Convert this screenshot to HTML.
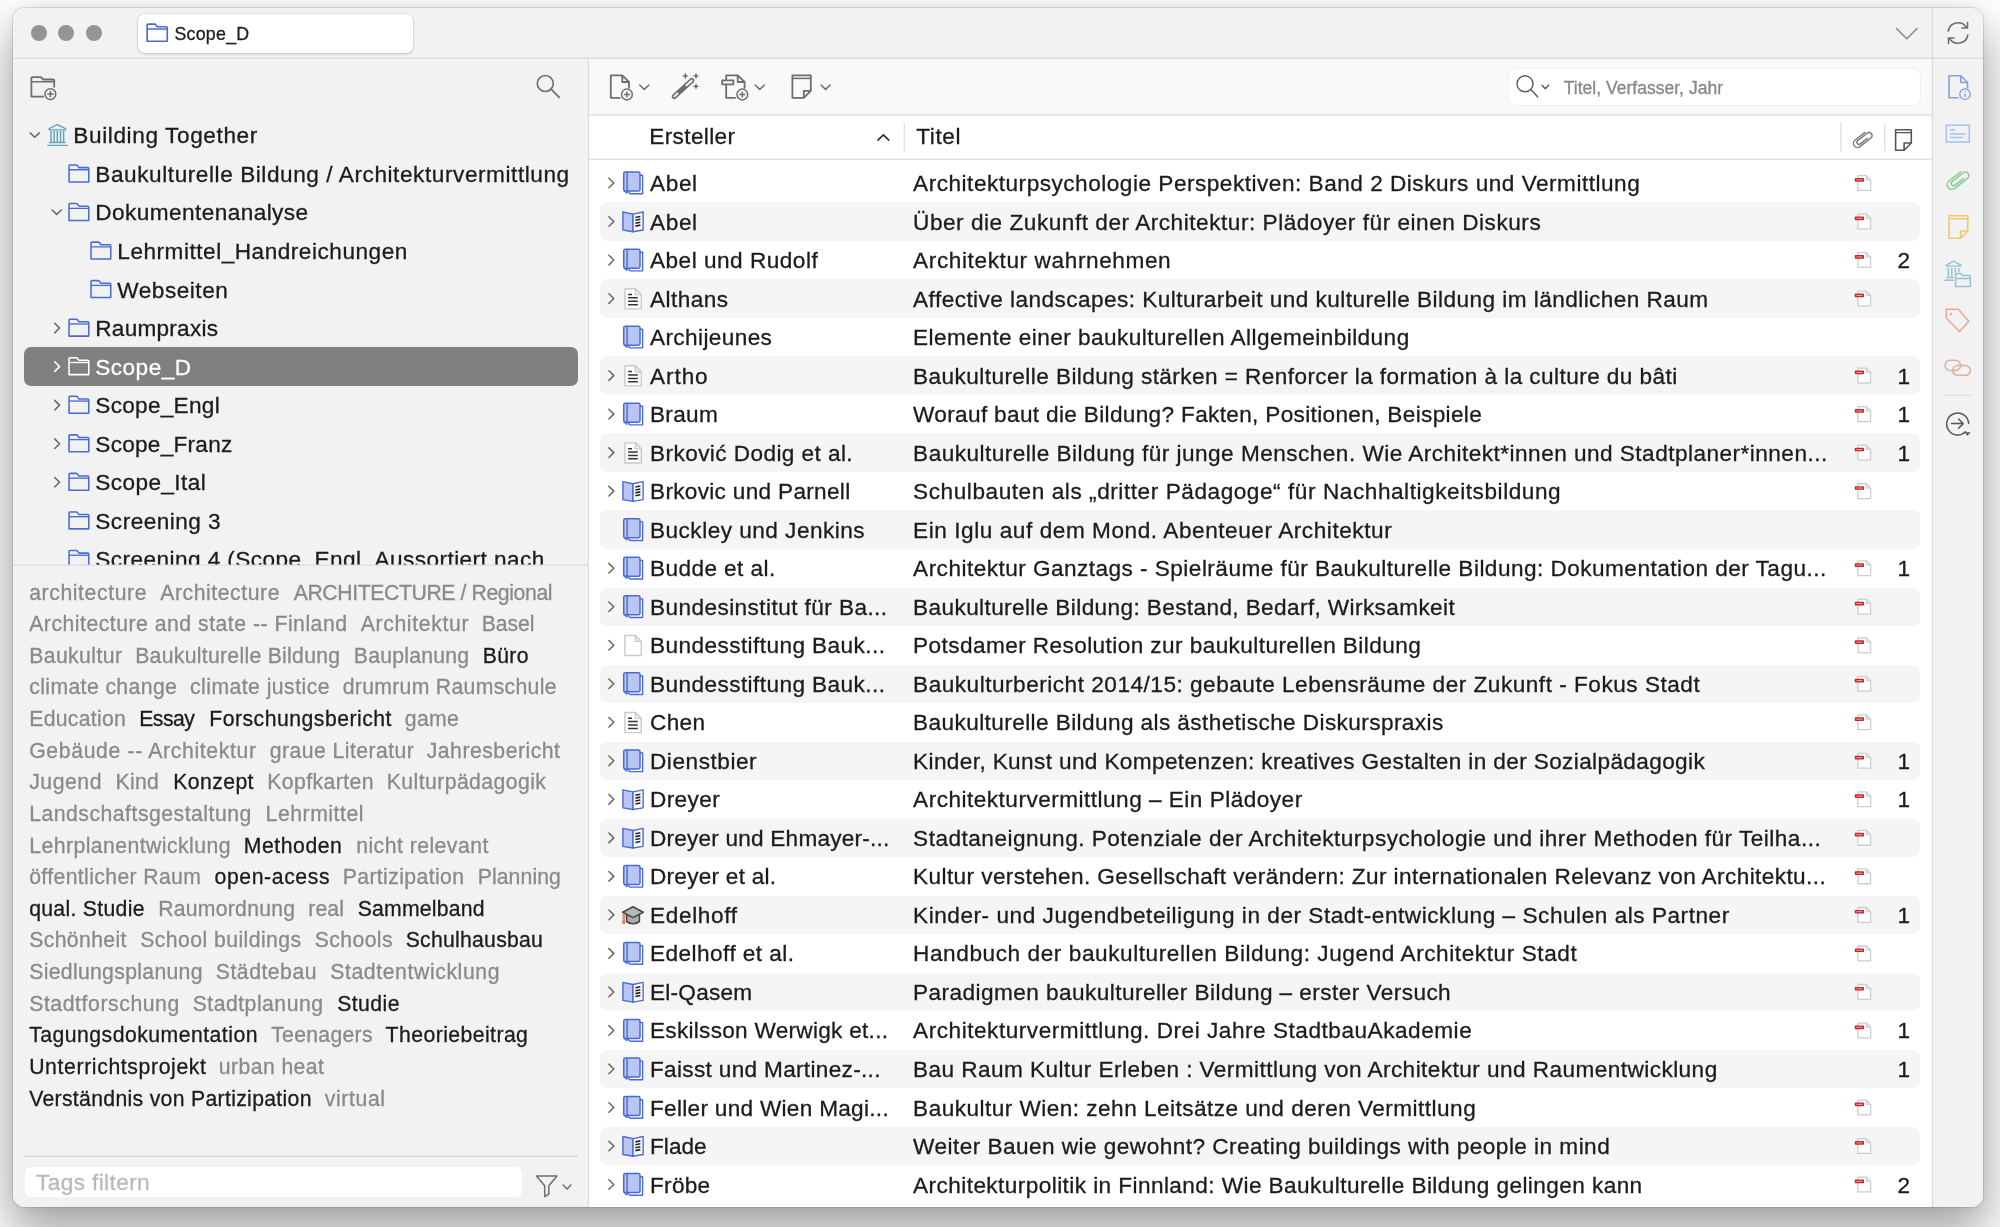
<!DOCTYPE html>
<html lang="de"><head><meta charset="utf-8"><title>Scope_D - Zotero</title>
<style>
html,body{margin:0;padding:0}
body{width:2000px;height:1227px;overflow:hidden;position:relative;background:#fff;
 font-family:"Liberation Sans",sans-serif;font-size:22.6px;letter-spacing:0.4px;color:#1c1c1c}
.t{position:absolute;white-space:nowrap;line-height:30px;height:30px;-webkit-text-stroke:.3px}
#shadow{position:absolute;left:13px;top:8px;width:1970px;height:1199px;border-radius:12px;
 box-shadow:0 0 0 1px rgba(0,0,0,.10),0 24px 50px 4px rgba(0,0,0,.36),0 0 10px rgba(0,0,0,.06)}
#win{will-change:transform;position:absolute;left:13px;top:8px;width:1970px;height:1199px;border-radius:12px;overflow:hidden;background:#f2f2f2}
#in{position:absolute;left:-13px;top:-8px;width:2000px;height:1227px}
#in>div,#in>svg,#tree>div,#tree>svg{position:absolute}
.tl{width:16.400px;height:16.400px;border-radius:50%;background:#949494;top:24.900px}
.hl{background:#dadada;height:1px}
.vl{background:#dadada;width:1px}
.tag{color:#8a8a8a}
.tag.d{color:#1c1c1c}
.row{left:600px;width:1320px;height:38.500px;border-radius:7px;background:#f5f5f5}
svg{overflow:visible}
</style></head><body>
<div id="shadow"></div>
<div id="win"><div id="in">
<div style="left:589px;top:59px;width:1343px;height:56px;background:#f9f9f9"></div>
<div style="left:589px;top:116px;width:1343px;height:1095px;background:#fff"></div>
<div style="left:1933px;top:59px;width:51px;height:1150px;background:#f2f2f2"></div>
<div class="tl" style="left:30.6px"></div>
<div class="tl" style="left:58.1px"></div>
<div class="tl" style="left:85.6px"></div>
<div style="left:138px;top:14px;width:275px;height:38.500px;background:#fff;border-radius:7px;box-shadow:0 0 0 1px rgba(0,0,0,.05),0 1px 3px rgba(0,0,0,.16)"></div>
<div class="t" style="left:174.4px;top:19.1px;font-size:17.8px;letter-spacing:0.274px;">Scope_D</div>
<div id="tree" style="left:13px;top:116px;width:575px;height:449px;overflow:hidden">
<div style="left:-13px;top:-116px;width:600px;height:700px">
<div style="position:absolute;left:24px;top:347.3px;width:554px;height:38.600px;border-radius:7px;background:#808080"></div>
<svg width="600" height="700" viewBox="0 0 600 700" fill="none" style="position:absolute;left:0;top:0"><path d="M30.10 132.90l4.60 4.40 4.60 -4.40" stroke="#666" stroke-width="1.5" stroke-linecap="round" stroke-linejoin="round"/><g transform="translate(47.30 124.00)"><path d="M10 .6L1.800 4.700v1.100h16.400V4.700z" stroke="#5fa5bb" stroke-width="1.300" stroke-linejoin="round"/><path d="M3.7 6.9v11.100M6.8 6.9v11.100M10 6.9v11.100M13.2 6.9v11.100M16.3 6.9v11.100" stroke="#5fa5bb" stroke-width="1.500"/><path d="M1.800 18.500h16.400" stroke="#5fa5bb" stroke-width="1.300"/><path d="M0 21.400h20.400" stroke="#5fa5bb" stroke-width="1.400"/></g><g transform="translate(68.20 164.15) scale(1.0)"><path d="M.85 17.75V1.85a1 1 0 0 1 1-1h6.400a1.200 1.200 0 0 1 .9.450l1.500 2.150h8.900a1 1 0 0 1 1 1v13.300z" stroke="#4a6bd6" stroke-width="1.55" stroke-linejoin="round"/><path d="M.85 5.600h19.700" stroke="#4a6bd6" stroke-width="1.35"/></g><path d="M52.10 210.00l4.60 4.40 4.60 -4.40" stroke="#666" stroke-width="1.5" stroke-linecap="round" stroke-linejoin="round"/><g transform="translate(68.20 202.70) scale(1.0)"><path d="M.85 17.75V1.85a1 1 0 0 1 1-1h6.400a1.200 1.200 0 0 1 .9.450l1.500 2.150h8.900a1 1 0 0 1 1 1v13.300z" stroke="#4a6bd6" stroke-width="1.55" stroke-linejoin="round"/><path d="M.85 5.600h19.700" stroke="#4a6bd6" stroke-width="1.35"/></g><g transform="translate(90.20 241.25) scale(1.0)"><path d="M.85 17.75V1.85a1 1 0 0 1 1-1h6.400a1.200 1.200 0 0 1 .9.450l1.500 2.150h8.900a1 1 0 0 1 1 1v13.300z" stroke="#4a6bd6" stroke-width="1.55" stroke-linejoin="round"/><path d="M.85 5.600h19.700" stroke="#4a6bd6" stroke-width="1.35"/></g><g transform="translate(90.20 279.80) scale(1.0)"><path d="M.85 17.75V1.85a1 1 0 0 1 1-1h6.400a1.200 1.200 0 0 1 .9.450l1.500 2.150h8.900a1 1 0 0 1 1 1v13.300z" stroke="#4a6bd6" stroke-width="1.55" stroke-linejoin="round"/><path d="M.85 5.600h19.700" stroke="#4a6bd6" stroke-width="1.35"/></g><path d="M54.70 323.25l4.9 4.8-4.9 4.8" stroke="#666" stroke-width="1.5" stroke-linecap="round" stroke-linejoin="round"/><g transform="translate(68.20 318.35) scale(1.0)"><path d="M.85 17.75V1.85a1 1 0 0 1 1-1h6.400a1.200 1.200 0 0 1 .9.450l1.500 2.150h8.900a1 1 0 0 1 1 1v13.300z" stroke="#4a6bd6" stroke-width="1.55" stroke-linejoin="round"/><path d="M.85 5.600h19.700" stroke="#4a6bd6" stroke-width="1.35"/></g><path d="M54.70 361.80l4.9 4.8-4.9 4.8" stroke="#fff" stroke-width="1.5" stroke-linecap="round" stroke-linejoin="round"/><g transform="translate(68.20 356.90) scale(1.0)"><path d="M.85 17.75V1.85a1 1 0 0 1 1-1h6.400a1.200 1.200 0 0 1 .9.450l1.500 2.150h8.900a1 1 0 0 1 1 1v13.300z" stroke="#fff" stroke-width="1.55" stroke-linejoin="round"/><path d="M.85 5.600h19.700" stroke="#fff" stroke-width="1.35"/></g><path d="M54.70 400.35l4.9 4.8-4.9 4.8" stroke="#666" stroke-width="1.5" stroke-linecap="round" stroke-linejoin="round"/><g transform="translate(68.20 395.45) scale(1.0)"><path d="M.85 17.75V1.85a1 1 0 0 1 1-1h6.400a1.200 1.200 0 0 1 .9.450l1.500 2.150h8.900a1 1 0 0 1 1 1v13.300z" stroke="#4a6bd6" stroke-width="1.55" stroke-linejoin="round"/><path d="M.85 5.600h19.700" stroke="#4a6bd6" stroke-width="1.35"/></g><path d="M54.70 438.90l4.9 4.8-4.9 4.8" stroke="#666" stroke-width="1.5" stroke-linecap="round" stroke-linejoin="round"/><g transform="translate(68.20 434.00) scale(1.0)"><path d="M.85 17.75V1.85a1 1 0 0 1 1-1h6.400a1.200 1.200 0 0 1 .9.450l1.500 2.150h8.900a1 1 0 0 1 1 1v13.300z" stroke="#4a6bd6" stroke-width="1.55" stroke-linejoin="round"/><path d="M.85 5.600h19.700" stroke="#4a6bd6" stroke-width="1.35"/></g><path d="M54.70 477.45l4.9 4.8-4.9 4.8" stroke="#666" stroke-width="1.5" stroke-linecap="round" stroke-linejoin="round"/><g transform="translate(68.20 472.55) scale(1.0)"><path d="M.85 17.75V1.85a1 1 0 0 1 1-1h6.400a1.200 1.200 0 0 1 .9.450l1.500 2.150h8.900a1 1 0 0 1 1 1v13.300z" stroke="#4a6bd6" stroke-width="1.55" stroke-linejoin="round"/><path d="M.85 5.600h19.700" stroke="#4a6bd6" stroke-width="1.35"/></g><g transform="translate(68.20 511.10) scale(1.0)"><path d="M.85 17.75V1.85a1 1 0 0 1 1-1h6.400a1.200 1.200 0 0 1 .9.450l1.500 2.150h8.900a1 1 0 0 1 1 1v13.300z" stroke="#4a6bd6" stroke-width="1.55" stroke-linejoin="round"/><path d="M.85 5.600h19.700" stroke="#4a6bd6" stroke-width="1.35"/></g><g transform="translate(68.20 549.65) scale(1.0)"><path d="M.85 17.75V1.85a1 1 0 0 1 1-1h6.400a1.200 1.200 0 0 1 .9.450l1.500 2.150h8.900a1 1 0 0 1 1 1v13.300z" stroke="#4a6bd6" stroke-width="1.55" stroke-linejoin="round"/><path d="M.85 5.600h19.700" stroke="#4a6bd6" stroke-width="1.35"/></g></svg>
<div class="t" style="left:73.3px;top:121.3px;letter-spacing:0.613px;">Building Together</div>
<div class="t" style="left:95.3px;top:159.9px;letter-spacing:0.568px;">Baukulturelle Bildung / Architekturvermittlung</div>
<div class="t" style="left:95.3px;top:198.4px;letter-spacing:0.426px;">Dokumentenanalyse</div>
<div class="t" style="left:117.3px;top:236.9px;letter-spacing:0.517px;">Lehrmittel_Handreichungen</div>
<div class="t" style="left:117.3px;top:275.5px;letter-spacing:0.520px;">Webseiten</div>
<div class="t" style="left:95.3px;top:314.1px;letter-spacing:0.239px;">Raumpraxis</div>
<div class="t" style="left:95.3px;top:352.6px;letter-spacing:0.458px;color:#fff">Scope_D</div>
<div class="t" style="left:95.3px;top:391.1px;letter-spacing:0.282px;">Scope_Engl</div>
<div class="t" style="left:95.3px;top:429.7px;letter-spacing:0.261px;">Scope_Franz</div>
<div class="t" style="left:95.3px;top:468.2px;letter-spacing:0.402px;">Scope_Ital</div>
<div class="t" style="left:95.3px;top:506.8px;letter-spacing:0.481px;">Screening 3</div>
<div class="t" style="left:95.3px;top:545.3px;letter-spacing:0.434px;">Screening 4 (Scope_Engl_Aussortiert nach</div>
</div></div>
<div class="t tag" style="left:29.2px;top:577.5px;font-size:21.2px;letter-spacing:0.600px;">architecture</div>
<div class="t tag" style="left:160.2px;top:577.5px;font-size:21.2px;letter-spacing:0.568px;">Architecture</div>
<div class="t tag" style="left:293.7px;top:577.5px;font-size:21.2px;letter-spacing:-0.385px;">ARCHITECTURE / Regional</div>
<div class="t tag" style="left:29.2px;top:609.1px;font-size:21.2px;letter-spacing:0.510px;">Architecture and state -- Finland</div>
<div class="t tag" style="left:360.7px;top:609.1px;font-size:21.2px;letter-spacing:0.653px;">Architektur</div>
<div class="t tag" style="left:481.7px;top:609.1px;font-size:21.2px;letter-spacing:-0.050px;">Basel</div>
<div class="t tag" style="left:29.2px;top:640.8px;font-size:21.2px;letter-spacing:0.411px;">Baukultur</div>
<div class="t tag" style="left:135.2px;top:640.8px;font-size:21.2px;letter-spacing:0.292px;">Baukulturelle Bildung</div>
<div class="t tag" style="left:353.8px;top:640.8px;font-size:21.2px;letter-spacing:0.243px;">Bauplanung</div>
<div class="t tag d" style="left:482.8px;top:640.8px;font-size:21.2px;letter-spacing:0.311px;">Büro</div>
<div class="t tag" style="left:29.2px;top:672.4px;font-size:21.2px;letter-spacing:0.399px;">climate change</div>
<div class="t tag" style="left:190.0px;top:672.4px;font-size:21.2px;letter-spacing:0.460px;">climate justice</div>
<div class="t tag" style="left:342.7px;top:672.4px;font-size:21.2px;letter-spacing:0.316px;">drumrum Raumschule</div>
<div class="t tag" style="left:29.2px;top:704.0px;font-size:21.2px;letter-spacing:0.306px;">Education</div>
<div class="t tag d" style="left:139.2px;top:704.0px;font-size:21.2px;letter-spacing:-0.501px;">Essay</div>
<div class="t tag d" style="left:209.2px;top:704.0px;font-size:21.2px;letter-spacing:0.500px;">Forschungsbericht</div>
<div class="t tag" style="left:404.8px;top:704.0px;font-size:21.2px;letter-spacing:0.367px;">game</div>
<div class="t tag" style="left:29.2px;top:735.6px;font-size:21.2px;letter-spacing:0.654px;">Gebäude -- Architektur</div>
<div class="t tag" style="left:269.8px;top:735.6px;font-size:21.2px;letter-spacing:0.449px;">graue Literatur</div>
<div class="t tag" style="left:426.7px;top:735.6px;font-size:21.2px;letter-spacing:0.509px;">Jahresbericht</div>
<div class="t tag" style="left:29.2px;top:767.3px;font-size:21.2px;letter-spacing:0.557px;">Jugend</div>
<div class="t tag" style="left:115.6px;top:767.3px;font-size:21.2px;letter-spacing:0.298px;">Kind</div>
<div class="t tag d" style="left:173.2px;top:767.3px;font-size:21.2px;letter-spacing:0.425px;">Konzept</div>
<div class="t tag" style="left:267.2px;top:767.3px;font-size:21.2px;letter-spacing:0.424px;">Kopfkarten</div>
<div class="t tag" style="left:386.8px;top:767.3px;font-size:21.2px;letter-spacing:0.426px;">Kulturpädagogik</div>
<div class="t tag" style="left:29.2px;top:798.9px;font-size:21.2px;letter-spacing:0.503px;">Landschaftsgestaltung</div>
<div class="t tag" style="left:265.6px;top:798.9px;font-size:21.2px;letter-spacing:0.541px;">Lehrmittel</div>
<div class="t tag" style="left:29.2px;top:830.5px;font-size:21.2px;letter-spacing:0.452px;">Lehrplanentwicklung</div>
<div class="t tag d" style="left:243.7px;top:830.5px;font-size:21.2px;letter-spacing:0.564px;">Methoden</div>
<div class="t tag" style="left:356.2px;top:830.5px;font-size:21.2px;letter-spacing:0.467px;">nicht relevant</div>
<div class="t tag" style="left:29.2px;top:862.2px;font-size:21.2px;letter-spacing:0.377px;">öffentlicher Raum</div>
<div class="t tag d" style="left:214.6px;top:862.2px;font-size:21.2px;letter-spacing:0.595px;">open-acess</div>
<div class="t tag" style="left:342.7px;top:862.2px;font-size:21.2px;letter-spacing:0.392px;">Partizipation</div>
<div class="t tag" style="left:477.7px;top:862.2px;font-size:21.2px;letter-spacing:0.104px;">Planning</div>
<div class="t tag d" style="left:29.2px;top:893.8px;font-size:21.2px;letter-spacing:0.307px;">qual. Studie</div>
<div class="t tag" style="left:158.2px;top:893.8px;font-size:21.2px;letter-spacing:0.262px;">Raumordnung</div>
<div class="t tag" style="left:308.2px;top:893.8px;font-size:21.2px;letter-spacing:0.152px;">real</div>
<div class="t tag d" style="left:357.7px;top:893.8px;font-size:21.2px;letter-spacing:0.217px;">Sammelband</div>
<div class="t tag" style="left:29.2px;top:925.4px;font-size:21.2px;letter-spacing:0.381px;">Schönheit</div>
<div class="t tag" style="left:140.2px;top:925.4px;font-size:21.2px;letter-spacing:0.439px;">School buildings</div>
<div class="t tag" style="left:314.8px;top:925.4px;font-size:21.2px;letter-spacing:0.385px;">Schools</div>
<div class="t tag d" style="left:405.7px;top:925.4px;font-size:21.2px;letter-spacing:0.264px;">Schulhausbau</div>
<div class="t tag" style="left:29.2px;top:957.1px;font-size:21.2px;letter-spacing:0.322px;">Siedlungsplanung</div>
<div class="t tag" style="left:215.8px;top:957.1px;font-size:21.2px;letter-spacing:0.511px;">Städtebau</div>
<div class="t tag" style="left:330.2px;top:957.1px;font-size:21.2px;letter-spacing:0.608px;">Stadtentwicklung</div>
<div class="t tag" style="left:29.2px;top:988.7px;font-size:21.2px;letter-spacing:0.582px;">Stadtforschung</div>
<div class="t tag" style="left:192.7px;top:988.7px;font-size:21.2px;letter-spacing:0.492px;">Stadtplanung</div>
<div class="t tag d" style="left:337.2px;top:988.7px;font-size:21.2px;letter-spacing:0.444px;">Studie</div>
<div class="t tag d" style="left:29.2px;top:1020.3px;font-size:21.2px;letter-spacing:0.484px;">Tagungsdokumentation</div>
<div class="t tag" style="left:271.2px;top:1020.3px;font-size:21.2px;letter-spacing:0.293px;">Teenagers</div>
<div class="t tag d" style="left:385.6px;top:1020.3px;font-size:21.2px;letter-spacing:0.437px;">Theoriebeitrag</div>
<div class="t tag d" style="left:29.2px;top:1052.0px;font-size:21.2px;letter-spacing:0.633px;">Unterrichtsprojekt</div>
<div class="t tag" style="left:218.8px;top:1052.0px;font-size:21.2px;letter-spacing:0.419px;">urban heat</div>
<div class="t tag d" style="left:29.2px;top:1083.6px;font-size:21.2px;letter-spacing:0.323px;">Verständnis von Partizipation</div>
<div class="t tag" style="left:324.7px;top:1083.6px;font-size:21.2px;letter-spacing:0.645px;">virtual</div>
<div style="left:25px;top:1167px;width:497px;height:30px;background:#fff;border-radius:6px"></div>
<div class="t" style="left:36.0px;top:1168.0px;color:#b9b9b9">Tags filtern</div>
<div style="left:1509px;top:68.500px;width:411px;height:36.500px;background:#fff;border-radius:7px;box-shadow:0 0 0 1px rgba(0,0,0,.035)"></div>
<div class="t" style="left:1563.7px;top:72.8px;font-size:17.5px;letter-spacing:0.021px;color:#878787">Titel, Verfasser, Jahr</div>
<div class="t" style="left:649.3px;top:122.3px;letter-spacing:0.353px;">Ersteller</div>
<div class="t" style="left:916.2px;top:122.3px;letter-spacing:0.610px;">Titel</div>
<div class="t" style="left:650.0px;top:169.0px;letter-spacing:0.622px;">Abel</div>
<div class="t" style="left:913.1px;top:169.0px;letter-spacing:0.506px;">Architekturpsychologie Perspektiven: Band 2 Diskurs und Vermittlung</div>
<div class="row" style="top:202.3px"></div>
<div class="t" style="left:650.0px;top:207.5px;letter-spacing:0.622px;">Abel</div>
<div class="t" style="left:913.1px;top:207.5px;letter-spacing:0.527px;">Über die Zukunft der Architektur: Plädoyer für einen Diskurs</div>
<div class="t" style="left:650.0px;top:246.0px;letter-spacing:0.493px;">Abel und Rudolf</div>
<div class="t" style="left:913.1px;top:246.0px;letter-spacing:0.605px;">Architektur wahrnehmen</div>
<div class="t" style="left:1897.5px;top:246.0px;">2</div>
<div class="row" style="top:279.3px"></div>
<div class="t" style="left:650.0px;top:284.6px;letter-spacing:0.454px;">Althans</div>
<div class="t" style="left:913.1px;top:284.6px;letter-spacing:0.442px;">Affective landscapes: Kulturarbeit und kulturelle Bildung im ländlichen Raum</div>
<div class="t" style="left:650.0px;top:323.1px;letter-spacing:0.384px;">Archijeunes</div>
<div class="t" style="left:913.1px;top:323.1px;letter-spacing:0.446px;">Elemente einer baukulturellen Allgemeinbildung</div>
<div class="row" style="top:356.3px"></div>
<div class="t" style="left:650.0px;top:361.6px;letter-spacing:0.921px;">Artho</div>
<div class="t" style="left:913.1px;top:361.6px;letter-spacing:0.423px;">Baukulturelle Bildung stärken = Renforcer la formation à la culture du bâti</div>
<div class="t" style="left:1897.5px;top:361.6px;">1</div>
<div class="t" style="left:650.0px;top:400.1px;letter-spacing:0.288px;">Braum</div>
<div class="t" style="left:913.1px;top:400.1px;letter-spacing:0.333px;">Worauf baut die Bildung? Fakten, Positionen, Beispiele</div>
<div class="t" style="left:1897.5px;top:400.1px;">1</div>
<div class="row" style="top:433.4px"></div>
<div class="t" style="left:650.0px;top:438.6px;letter-spacing:0.419px;">Brković Dodig et al.</div>
<div class="t" style="left:913.1px;top:438.6px;letter-spacing:0.470px;">Baukulturelle Bildung für junge Menschen. Wie Architekt*innen und Stadtplaner*innen...</div>
<div class="t" style="left:1897.5px;top:438.6px;">1</div>
<div class="t" style="left:650.0px;top:477.2px;letter-spacing:0.308px;">Brkovic und Parnell</div>
<div class="t" style="left:913.1px;top:477.2px;letter-spacing:0.557px;">Schulbauten als „dritter Pädagoge“ für Nachhaltigkeitsbildung</div>
<div class="row" style="top:510.4px"></div>
<div class="t" style="left:650.0px;top:515.7px;letter-spacing:0.479px;">Buckley und Jenkins</div>
<div class="t" style="left:913.1px;top:515.7px;letter-spacing:0.557px;">Ein Iglu auf dem Mond. Abenteuer Architektur</div>
<div class="t" style="left:650.0px;top:554.2px;letter-spacing:0.419px;">Budde et al.</div>
<div class="t" style="left:913.1px;top:554.2px;letter-spacing:0.464px;">Architektur Ganztags - Spielräume für Baukulturelle Bildung: Dokumentation der Tagu...</div>
<div class="t" style="left:1897.5px;top:554.2px;">1</div>
<div class="row" style="top:587.5px"></div>
<div class="t" style="left:650.0px;top:592.7px;letter-spacing:0.425px;">Bundesinstitut für Ba...</div>
<div class="t" style="left:913.1px;top:592.7px;letter-spacing:0.384px;">Baukulturelle Bildung: Bestand, Bedarf, Wirksamkeit</div>
<div class="t" style="left:650.0px;top:631.2px;letter-spacing:0.424px;">Bundesstiftung Bauk...</div>
<div class="t" style="left:913.1px;top:631.2px;letter-spacing:0.414px;">Potsdamer Resolution zur baukulturellen Bildung</div>
<div class="row" style="top:664.5px"></div>
<div class="t" style="left:650.0px;top:669.8px;letter-spacing:0.424px;">Bundesstiftung Bauk...</div>
<div class="t" style="left:913.1px;top:669.8px;letter-spacing:0.507px;">Baukulturbericht 2014/15: gebaute Lebensräume der Zukunft - Fokus Stadt</div>
<div class="t" style="left:650.0px;top:708.3px;letter-spacing:0.328px;">Chen</div>
<div class="t" style="left:913.1px;top:708.3px;letter-spacing:0.405px;">Baukulturelle Bildung als ästhetische Diskurspraxis</div>
<div class="row" style="top:741.5px"></div>
<div class="t" style="left:650.0px;top:746.8px;letter-spacing:0.542px;">Dienstbier</div>
<div class="t" style="left:913.1px;top:746.8px;letter-spacing:0.371px;">Kinder, Kunst und Kompetenzen: kreatives Gestalten in der Sozialpädagogik</div>
<div class="t" style="left:1897.5px;top:746.8px;">1</div>
<div class="t" style="left:650.0px;top:785.3px;letter-spacing:0.381px;">Dreyer</div>
<div class="t" style="left:913.1px;top:785.3px;letter-spacing:0.483px;">Architekturvermittlung – Ein Plädoyer</div>
<div class="t" style="left:1897.5px;top:785.3px;">1</div>
<div class="row" style="top:818.6px"></div>
<div class="t" style="left:650.0px;top:823.8px;letter-spacing:0.209px;">Dreyer und Ehmayer-...</div>
<div class="t" style="left:913.1px;top:823.8px;letter-spacing:0.487px;">Stadtaneignung. Potenziale der Architekturpsychologie und ihrer Methoden für Teilha...</div>
<div class="t" style="left:650.0px;top:862.4px;letter-spacing:0.253px;">Dreyer et al.</div>
<div class="t" style="left:913.1px;top:862.4px;letter-spacing:0.399px;">Kultur verstehen. Gesellschaft verändern: Zur internationalen Relevanz von Architektu...</div>
<div class="row" style="top:895.6px"></div>
<div class="t" style="left:650.0px;top:900.9px;letter-spacing:0.657px;">Edelhoff</div>
<div class="t" style="left:913.1px;top:900.9px;letter-spacing:0.532px;">Kinder- und Jugendbeteiligung in der Stadt-entwicklung – Schulen als Partner</div>
<div class="t" style="left:1897.5px;top:900.9px;">1</div>
<div class="t" style="left:650.0px;top:939.4px;letter-spacing:0.452px;">Edelhoff et al.</div>
<div class="t" style="left:913.1px;top:939.4px;letter-spacing:0.572px;">Handbuch der baukulturellen Bildung: Jugend Architektur Stadt</div>
<div class="row" style="top:972.7px"></div>
<div class="t" style="left:650.0px;top:977.9px;letter-spacing:0.238px;">El-Qasem</div>
<div class="t" style="left:913.1px;top:977.9px;letter-spacing:0.437px;">Paradigmen baukultureller Bildung – erster Versuch</div>
<div class="t" style="left:650.0px;top:1016.4px;letter-spacing:0.278px;">Eskilsson Werwigk et...</div>
<div class="t" style="left:913.1px;top:1016.4px;letter-spacing:0.523px;">Architekturvermittlung. Drei Jahre StadtbauAkademie</div>
<div class="t" style="left:1897.5px;top:1016.4px;">1</div>
<div class="row" style="top:1049.7px"></div>
<div class="t" style="left:650.0px;top:1055.0px;letter-spacing:0.318px;">Faisst und Martinez-...</div>
<div class="t" style="left:913.1px;top:1055.0px;letter-spacing:0.441px;">Bau Raum Kultur Erleben : Vermittlung von Architektur und Raumentwicklung</div>
<div class="t" style="left:1897.5px;top:1055.0px;">1</div>
<div class="t" style="left:650.0px;top:1093.5px;letter-spacing:0.290px;">Feller und Wien Magi...</div>
<div class="t" style="left:913.1px;top:1093.5px;letter-spacing:0.467px;">Baukultur Wien: zehn Leitsätze und deren Vermittlung</div>
<div class="row" style="top:1126.7px"></div>
<div class="t" style="left:650.0px;top:1132.0px;letter-spacing:0.042px;">Flade</div>
<div class="t" style="left:913.1px;top:1132.0px;letter-spacing:0.458px;">Weiter Bauen wie gewohnt? Creating buildings with people in mind</div>
<div class="t" style="left:650.0px;top:1170.5px;letter-spacing:0.292px;">Fröbe</div>
<div class="t" style="left:913.1px;top:1170.5px;letter-spacing:0.422px;">Architekturpolitik in Finnland: Wie Baukulturelle Bildung gelingen kann</div>
<div class="t" style="left:1897.5px;top:1170.5px;">2</div>
<svg width="2000" height="1227" viewBox="0 0 2000 1227" fill="none" style="left:0;top:0"><path d="M13 58.1H1984" stroke="#d9d9d9" stroke-width="1.2"/>
<path d="M589 115.0H1932" stroke="#e2e2e2" stroke-width="1.6"/>
<path d="M589 159.2H1932" stroke="#e4e4e4" stroke-width="1.5"/>
<path d="M588.45 58.7V1208" stroke="#dadada" stroke-width="1.2"/>
<path d="M1932.4 8V1208" stroke="#dadada" stroke-width="1.2"/>
<path d="M13 565.2H588" stroke="#dcdcdc" stroke-width="1.2"/>
<path d="M24 1156.4H578" stroke="#d6d6d6" stroke-width="1.1"/>
<g transform="translate(146.30 23.20) scale(1.02)"><path d="M.85 17.75V1.85a1 1 0 0 1 1-1h6.400a1.200 1.200 0 0 1 .9.450l1.500 2.150h8.900a1 1 0 0 1 1 1v13.300z" stroke="#4a6bd6" stroke-width="1.6" stroke-linejoin="round"/><path d="M.85 5.600h19.700" stroke="#4a6bd6" stroke-width="1.40"/></g>
<path d="M1896.500 28.500l10.300 10.300 10.300-10.300" stroke="#8a8a8a" stroke-width="1.500" stroke-linecap="round" stroke-linejoin="round"/>
<g transform="translate(1946 21)" stroke="#6e6e6e" stroke-width="1.600" stroke-linecap="round" stroke-linejoin="round"><path d="M2.200 10A10 10 0 0 1 20.500 6.500M21.800 14A10 10 0 0 1 3.500 17.500"/><path d="M21.500 1.500v5.500h-5.500M2.500 22.500V17h5.500"/></g>
<g stroke="#6e6e6e" stroke-width="1.800" stroke-linejoin="round"><path d="M44 96.700H31.400V78.100a1 1 0 0 1 1-1h8.300a1.200 1.200 0 0 1 .9.450l1.400 1.950h10.200a1 1 0 0 1 1 1v7"/><path d="M31.400 81.800h22.800" stroke-width="1.500"/><circle cx="50.400" cy="94.100" r="5.400" stroke-width="1.500"/><path d="M50.400 91v6.200M47.300 94.100h6.200" stroke-width="1.500"/></g>
<circle cx="545.300" cy="83.500" r="8" stroke="#6e6e6e" stroke-width="1.600"/><path d="M551.200 89.400l8 8" stroke="#6e6e6e" stroke-width="1.700" stroke-linecap="round"/>
<path d="M536.500 1176h20.500l-8.200 9.800v8.200l-4.100 2.600v-10.800z" stroke="#6e6e6e" stroke-width="1.500" stroke-linejoin="round"/>
<path d="M563.10 1185.00l3.90 4.00 3.90 -4.00" stroke="#6e6e6e" stroke-width="1.5" stroke-linecap="round" stroke-linejoin="round"/>
<path d="M620.500 97.800H610.800V75.300h11.500l6.700 6.700v6.500" stroke="#6e6e6e" stroke-width="1.800" stroke-linejoin="round"/><path d="M622.300 75.300v6.700h6.700" stroke="#6e6e6e" stroke-width="1.800" stroke-linejoin="round"/><circle cx="626.900" cy="94.500" r="5.400" stroke="#6e6e6e" stroke-width="1.500"/><path d="M626.900 91.400v6.200M623.800 94.500h6.200" stroke="#6e6e6e" stroke-width="1.500"/>
<path d="M639.70 85.00l4.60 4.40 4.60 -4.40" stroke="#6e6e6e" stroke-width="1.5" stroke-linecap="round" stroke-linejoin="round"/>
<path d="M674.400 96.400l17.300-15.800" stroke="#6e6e6e" stroke-width="5.200" stroke-linecap="round"/><path d="M674.500 96.300l3-2.740M686.500 85.340l5.100-4.660" stroke="#f9f9f9" stroke-width="2" stroke-linecap="round"/>
<path d="M685.4 72.4l0.95 2.55 2.55 0.95 -2.55 0.95 -0.95 2.55 -0.95 -2.55 -2.55 -0.95 2.55 -0.95z" fill="#6e6e6e"/><path d="M696 72.4l0.95 2.55 2.55 0.95 -2.55 0.95 -0.95 2.55 -0.95 -2.55 -2.55 -0.95 2.55 -0.95z" fill="#6e6e6e"/><path d="M696 82.9l0.95 2.55 2.55 0.95 -2.55 0.95 -0.95 2.55 -0.95 -2.55 -2.55 -0.95 2.55 -0.95z" fill="#6e6e6e"/>
<path d="M735.800 97.800H726.200V75.300h11.500l6.900 6.700v6.500" stroke="#6e6e6e" stroke-width="1.800" stroke-linejoin="round"/><path d="M737.700 75.300v6.700h6.900" stroke="#6e6e6e" stroke-width="1.800" stroke-linejoin="round"/><rect x="722.200" y="80.300" width="11.200" height="4" fill="#f9f9f9" stroke="#6e6e6e" stroke-width="1.800" stroke-linejoin="round"/><circle cx="742.300" cy="94.500" r="5.400" stroke="#6e6e6e" stroke-width="1.500"/><path d="M742.300 91.400v6.200M739.200 94.500h6.200" stroke="#6e6e6e" stroke-width="1.500"/>
<path d="M755.20 85.00l4.60 4.40 4.60 -4.40" stroke="#6e6e6e" stroke-width="1.5" stroke-linecap="round" stroke-linejoin="round"/>
<path d="M792.400 75.300h18.400v15.500l-7 7h-11.400z" stroke="#6e6e6e" stroke-width="1.800" stroke-linejoin="round"/><path d="M792.400 78.400h18.400" stroke="#6e6e6e" stroke-width="1.500"/><path d="M810.800 90.800h-7v7" stroke="#6e6e6e" stroke-width="1.800" stroke-linejoin="round"/>
<path d="M821.00 85.00l4.60 4.40 4.60 -4.40" stroke="#6e6e6e" stroke-width="1.5" stroke-linecap="round" stroke-linejoin="round"/>
<circle cx="1525" cy="83.800" r="8" stroke="#5c5c5c" stroke-width="1.400"/><path d="M1530.800 89.600l6.800 7.100" stroke="#5c5c5c" stroke-width="1.500" stroke-linecap="round"/>
<path d="M1542.10 85.30l3.20 3.40 3.20 -3.40" stroke="#5c5c5c" stroke-width="1.5" stroke-linecap="round" stroke-linejoin="round"/>
<path d="M878 140.200l5.400-5.400 5.400 5.400" stroke="#333" stroke-width="1.700" stroke-linecap="round" stroke-linejoin="round"/>
<path d="M904.3 122.500v29" stroke="#e0e0e0" stroke-width="1.300"/>
<path d="M1840.8 122.500v29" stroke="#e0e0e0" stroke-width="1.300"/>
<path d="M1884.8 122.500v29" stroke="#e0e0e0" stroke-width="1.300"/>
<g transform="translate(1862.6 139.4) rotate(-38) scale(0.8) translate(-13.700 -6.700)"><path d="M21.500 1.700H5.500a5 5 0 0 0 0 10h17.500a3.800 3.800 0 0 0 0-7.600H8a2.600 2.600 0 0 0 0 5.200H19.500" stroke="#777" stroke-width="1.75" stroke-linecap="round"/></g>
<g stroke="#555" stroke-width="1.600" stroke-linejoin="round"><path d="M1895.600 129.800h15.700v13.200l-7.200 7.200h-8.500z"/><path d="M1895.600 132.600h15.700" stroke-width="1.400"/><path d="M1911.300 143h-7.200v7.200"/></g>
<path d="M608.90 178.20l4.9 4.8-4.9 4.8" stroke="#666" stroke-width="1.5" stroke-linecap="round" stroke-linejoin="round"/>
<g transform="translate(622.00 171.00)"><path d="M5.2 20.2l3 2.6h12.4V4.200H18" fill="#fff" stroke="#4a6ad8" stroke-width="1.4" stroke-linejoin="round"/><rect x="1.7" y="1.1" width="16.3" height="19" rx="1.6" fill="#b8c6f1" stroke="#4a6ad8" stroke-width="1.5"/><path d="M5.1 1.2v18.8" stroke="#4a6ad8" stroke-width="1.4"/><path d="M1.9 19.6l3.4 3" stroke="#4a6ad8" stroke-width="1.4"/></g>
<g transform="translate(1854.00 174.00)"><path d="M3.9 1.600h8.400l4.300 4.300v10.500H3.900z" fill="#fff" stroke="#cdcdcd" stroke-width="1.300" stroke-linejoin="round"/><path d="M12.3 1.600v4.300h4.300z" fill="#e9e9e9" stroke="#cdcdcd" stroke-width="1" stroke-linejoin="round"/><rect x=".8" y="4" width="9.200" height="3.700" rx=".7" fill="#cf212c"/><path d="M2.300 5.850h6.200" stroke="#f4b4b8" stroke-width=".9"/></g>
<path d="M608.90 216.72l4.9 4.8-4.9 4.8" stroke="#666" stroke-width="1.5" stroke-linecap="round" stroke-linejoin="round"/>
<g transform="translate(622.00 211.02)"><path d="M.9 1l10.1 2.1v17.6L.9 19z" fill="#b8c6f1" stroke="#4a6ad8" stroke-width="1.4" stroke-linejoin="round"/><path d="M21.1 1L11 3.100v17.6l10.1-1.700z" fill="#fff" stroke="#4a6ad8" stroke-width="1.4" stroke-linejoin="round"/><path d="M13.4 6.4l5-1M13.4 9.300l5-1M13.4 12.200l5-1M13.4 15.100l5-1" stroke="#222" stroke-width="1.6"/></g>
<g transform="translate(1854.00 212.52)"><path d="M3.9 1.600h8.400l4.300 4.300v10.500H3.900z" fill="#fff" stroke="#cdcdcd" stroke-width="1.300" stroke-linejoin="round"/><path d="M12.3 1.600v4.300h4.300z" fill="#e9e9e9" stroke="#cdcdcd" stroke-width="1" stroke-linejoin="round"/><rect x=".8" y="4" width="9.200" height="3.700" rx=".7" fill="#cf212c"/><path d="M2.300 5.850h6.200" stroke="#f4b4b8" stroke-width=".9"/></g>
<path d="M608.90 255.24l4.9 4.8-4.9 4.8" stroke="#666" stroke-width="1.5" stroke-linecap="round" stroke-linejoin="round"/>
<g transform="translate(622.00 248.04)"><path d="M5.2 20.2l3 2.6h12.4V4.200H18" fill="#fff" stroke="#4a6ad8" stroke-width="1.4" stroke-linejoin="round"/><rect x="1.7" y="1.1" width="16.3" height="19" rx="1.6" fill="#b8c6f1" stroke="#4a6ad8" stroke-width="1.5"/><path d="M5.1 1.2v18.8" stroke="#4a6ad8" stroke-width="1.4"/><path d="M1.9 19.6l3.4 3" stroke="#4a6ad8" stroke-width="1.4"/></g>
<g transform="translate(1854.00 251.04)"><path d="M3.9 1.600h8.400l4.300 4.300v10.500H3.900z" fill="#fff" stroke="#cdcdcd" stroke-width="1.300" stroke-linejoin="round"/><path d="M12.3 1.600v4.300h4.300z" fill="#e9e9e9" stroke="#cdcdcd" stroke-width="1" stroke-linejoin="round"/><rect x=".8" y="4" width="9.200" height="3.700" rx=".7" fill="#cf212c"/><path d="M2.300 5.850h6.200" stroke="#f4b4b8" stroke-width=".9"/></g>
<path d="M608.90 293.76l4.9 4.8-4.9 4.8" stroke="#666" stroke-width="1.5" stroke-linecap="round" stroke-linejoin="round"/>
<g transform="translate(623.00 287.06)"><path d="M1.9 1.7h10.4l6 6V21.800H1.9z" fill="#fff" stroke="#c9c9c9" stroke-width="1.4" stroke-linejoin="round"/><path d="M12.3 1.7v6h6z" fill="#eee" stroke="#c9c9c9" stroke-width="1.2" stroke-linejoin="round"/><path d="M5.1 7.500h3.900M5.100 10.800h9.700M5.100 14.300h9.700M5.100 17.700h9.700" stroke="#333" stroke-width="1.500"/></g>
<g transform="translate(1854.00 289.56)"><path d="M3.9 1.600h8.400l4.300 4.300v10.500H3.900z" fill="#fff" stroke="#cdcdcd" stroke-width="1.300" stroke-linejoin="round"/><path d="M12.3 1.600v4.300h4.300z" fill="#e9e9e9" stroke="#cdcdcd" stroke-width="1" stroke-linejoin="round"/><rect x=".8" y="4" width="9.200" height="3.700" rx=".7" fill="#cf212c"/><path d="M2.300 5.850h6.200" stroke="#f4b4b8" stroke-width=".9"/></g>
<g transform="translate(622.00 325.08)"><path d="M5.2 20.2l3 2.6h12.4V4.200H18" fill="#fff" stroke="#4a6ad8" stroke-width="1.4" stroke-linejoin="round"/><rect x="1.7" y="1.1" width="16.3" height="19" rx="1.6" fill="#b8c6f1" stroke="#4a6ad8" stroke-width="1.5"/><path d="M5.1 1.2v18.8" stroke="#4a6ad8" stroke-width="1.4"/><path d="M1.9 19.6l3.4 3" stroke="#4a6ad8" stroke-width="1.4"/></g>
<path d="M608.90 370.80l4.9 4.8-4.9 4.8" stroke="#666" stroke-width="1.5" stroke-linecap="round" stroke-linejoin="round"/>
<g transform="translate(623.00 364.10)"><path d="M1.9 1.7h10.4l6 6V21.800H1.9z" fill="#fff" stroke="#c9c9c9" stroke-width="1.4" stroke-linejoin="round"/><path d="M12.3 1.7v6h6z" fill="#eee" stroke="#c9c9c9" stroke-width="1.2" stroke-linejoin="round"/><path d="M5.1 7.500h3.900M5.100 10.800h9.700M5.100 14.300h9.700M5.100 17.700h9.700" stroke="#333" stroke-width="1.500"/></g>
<g transform="translate(1854.00 366.60)"><path d="M3.9 1.600h8.400l4.300 4.300v10.500H3.900z" fill="#fff" stroke="#cdcdcd" stroke-width="1.300" stroke-linejoin="round"/><path d="M12.3 1.600v4.300h4.300z" fill="#e9e9e9" stroke="#cdcdcd" stroke-width="1" stroke-linejoin="round"/><rect x=".8" y="4" width="9.200" height="3.700" rx=".7" fill="#cf212c"/><path d="M2.300 5.850h6.200" stroke="#f4b4b8" stroke-width=".9"/></g>
<path d="M608.90 409.32l4.9 4.8-4.9 4.8" stroke="#666" stroke-width="1.5" stroke-linecap="round" stroke-linejoin="round"/>
<g transform="translate(622.00 402.12)"><path d="M5.2 20.2l3 2.6h12.4V4.200H18" fill="#fff" stroke="#4a6ad8" stroke-width="1.4" stroke-linejoin="round"/><rect x="1.7" y="1.1" width="16.3" height="19" rx="1.6" fill="#b8c6f1" stroke="#4a6ad8" stroke-width="1.5"/><path d="M5.1 1.2v18.8" stroke="#4a6ad8" stroke-width="1.4"/><path d="M1.9 19.6l3.4 3" stroke="#4a6ad8" stroke-width="1.4"/></g>
<g transform="translate(1854.00 405.12)"><path d="M3.9 1.600h8.400l4.300 4.300v10.500H3.900z" fill="#fff" stroke="#cdcdcd" stroke-width="1.300" stroke-linejoin="round"/><path d="M12.3 1.600v4.300h4.300z" fill="#e9e9e9" stroke="#cdcdcd" stroke-width="1" stroke-linejoin="round"/><rect x=".8" y="4" width="9.200" height="3.700" rx=".7" fill="#cf212c"/><path d="M2.300 5.850h6.200" stroke="#f4b4b8" stroke-width=".9"/></g>
<path d="M608.90 447.84l4.9 4.8-4.9 4.8" stroke="#666" stroke-width="1.5" stroke-linecap="round" stroke-linejoin="round"/>
<g transform="translate(623.00 441.14)"><path d="M1.9 1.7h10.4l6 6V21.800H1.9z" fill="#fff" stroke="#c9c9c9" stroke-width="1.4" stroke-linejoin="round"/><path d="M12.3 1.7v6h6z" fill="#eee" stroke="#c9c9c9" stroke-width="1.2" stroke-linejoin="round"/><path d="M5.1 7.500h3.900M5.100 10.800h9.700M5.100 14.300h9.700M5.100 17.700h9.700" stroke="#333" stroke-width="1.500"/></g>
<g transform="translate(1854.00 443.64)"><path d="M3.9 1.600h8.400l4.300 4.300v10.500H3.900z" fill="#fff" stroke="#cdcdcd" stroke-width="1.300" stroke-linejoin="round"/><path d="M12.3 1.600v4.300h4.300z" fill="#e9e9e9" stroke="#cdcdcd" stroke-width="1" stroke-linejoin="round"/><rect x=".8" y="4" width="9.200" height="3.700" rx=".7" fill="#cf212c"/><path d="M2.300 5.850h6.200" stroke="#f4b4b8" stroke-width=".9"/></g>
<path d="M608.90 486.36l4.9 4.8-4.9 4.8" stroke="#666" stroke-width="1.5" stroke-linecap="round" stroke-linejoin="round"/>
<g transform="translate(622.00 480.66)"><path d="M.9 1l10.1 2.1v17.6L.9 19z" fill="#b8c6f1" stroke="#4a6ad8" stroke-width="1.4" stroke-linejoin="round"/><path d="M21.1 1L11 3.100v17.6l10.1-1.700z" fill="#fff" stroke="#4a6ad8" stroke-width="1.4" stroke-linejoin="round"/><path d="M13.4 6.4l5-1M13.4 9.300l5-1M13.4 12.200l5-1M13.4 15.100l5-1" stroke="#222" stroke-width="1.6"/></g>
<g transform="translate(1854.00 482.16)"><path d="M3.9 1.600h8.400l4.300 4.300v10.500H3.900z" fill="#fff" stroke="#cdcdcd" stroke-width="1.300" stroke-linejoin="round"/><path d="M12.3 1.600v4.300h4.300z" fill="#e9e9e9" stroke="#cdcdcd" stroke-width="1" stroke-linejoin="round"/><rect x=".8" y="4" width="9.200" height="3.700" rx=".7" fill="#cf212c"/><path d="M2.300 5.850h6.200" stroke="#f4b4b8" stroke-width=".9"/></g>
<g transform="translate(622.00 517.68)"><path d="M5.2 20.2l3 2.6h12.4V4.200H18" fill="#fff" stroke="#4a6ad8" stroke-width="1.4" stroke-linejoin="round"/><rect x="1.7" y="1.1" width="16.3" height="19" rx="1.6" fill="#b8c6f1" stroke="#4a6ad8" stroke-width="1.5"/><path d="M5.1 1.2v18.8" stroke="#4a6ad8" stroke-width="1.4"/><path d="M1.9 19.6l3.4 3" stroke="#4a6ad8" stroke-width="1.4"/></g>
<path d="M608.90 563.40l4.9 4.8-4.9 4.8" stroke="#666" stroke-width="1.5" stroke-linecap="round" stroke-linejoin="round"/>
<g transform="translate(622.00 556.20)"><path d="M5.2 20.2l3 2.6h12.4V4.200H18" fill="#fff" stroke="#4a6ad8" stroke-width="1.4" stroke-linejoin="round"/><rect x="1.7" y="1.1" width="16.3" height="19" rx="1.6" fill="#b8c6f1" stroke="#4a6ad8" stroke-width="1.5"/><path d="M5.1 1.2v18.8" stroke="#4a6ad8" stroke-width="1.4"/><path d="M1.9 19.6l3.4 3" stroke="#4a6ad8" stroke-width="1.4"/></g>
<g transform="translate(1854.00 559.20)"><path d="M3.9 1.600h8.400l4.300 4.300v10.500H3.900z" fill="#fff" stroke="#cdcdcd" stroke-width="1.300" stroke-linejoin="round"/><path d="M12.3 1.600v4.300h4.300z" fill="#e9e9e9" stroke="#cdcdcd" stroke-width="1" stroke-linejoin="round"/><rect x=".8" y="4" width="9.200" height="3.700" rx=".7" fill="#cf212c"/><path d="M2.300 5.850h6.200" stroke="#f4b4b8" stroke-width=".9"/></g>
<path d="M608.90 601.92l4.9 4.8-4.9 4.8" stroke="#666" stroke-width="1.5" stroke-linecap="round" stroke-linejoin="round"/>
<g transform="translate(622.00 594.72)"><path d="M5.2 20.2l3 2.6h12.4V4.200H18" fill="#fff" stroke="#4a6ad8" stroke-width="1.4" stroke-linejoin="round"/><rect x="1.7" y="1.1" width="16.3" height="19" rx="1.6" fill="#b8c6f1" stroke="#4a6ad8" stroke-width="1.5"/><path d="M5.1 1.2v18.8" stroke="#4a6ad8" stroke-width="1.4"/><path d="M1.9 19.6l3.4 3" stroke="#4a6ad8" stroke-width="1.4"/></g>
<g transform="translate(1854.00 597.72)"><path d="M3.9 1.600h8.400l4.300 4.300v10.500H3.900z" fill="#fff" stroke="#cdcdcd" stroke-width="1.300" stroke-linejoin="round"/><path d="M12.3 1.600v4.300h4.300z" fill="#e9e9e9" stroke="#cdcdcd" stroke-width="1" stroke-linejoin="round"/><rect x=".8" y="4" width="9.200" height="3.700" rx=".7" fill="#cf212c"/><path d="M2.300 5.850h6.200" stroke="#f4b4b8" stroke-width=".9"/></g>
<path d="M608.90 640.44l4.9 4.8-4.9 4.8" stroke="#666" stroke-width="1.5" stroke-linecap="round" stroke-linejoin="round"/>
<g transform="translate(623.00 633.74)"><path d="M1.9 1.7h10.4l6 6V21.800H1.9z" fill="#fff" stroke="#c9c9c9" stroke-width="1.4" stroke-linejoin="round"/><path d="M12.3 1.7v6h6z" fill="#eee" stroke="#c9c9c9" stroke-width="1.2" stroke-linejoin="round"/></g>
<g transform="translate(1854.00 636.24)"><path d="M3.9 1.600h8.400l4.300 4.300v10.500H3.900z" fill="#fff" stroke="#cdcdcd" stroke-width="1.300" stroke-linejoin="round"/><path d="M12.3 1.600v4.300h4.300z" fill="#e9e9e9" stroke="#cdcdcd" stroke-width="1" stroke-linejoin="round"/><rect x=".8" y="4" width="9.200" height="3.700" rx=".7" fill="#cf212c"/><path d="M2.300 5.850h6.200" stroke="#f4b4b8" stroke-width=".9"/></g>
<path d="M608.90 678.96l4.9 4.8-4.9 4.8" stroke="#666" stroke-width="1.5" stroke-linecap="round" stroke-linejoin="round"/>
<g transform="translate(622.00 671.76)"><path d="M5.2 20.2l3 2.6h12.4V4.200H18" fill="#fff" stroke="#4a6ad8" stroke-width="1.4" stroke-linejoin="round"/><rect x="1.7" y="1.1" width="16.3" height="19" rx="1.6" fill="#b8c6f1" stroke="#4a6ad8" stroke-width="1.5"/><path d="M5.1 1.2v18.8" stroke="#4a6ad8" stroke-width="1.4"/><path d="M1.9 19.6l3.4 3" stroke="#4a6ad8" stroke-width="1.4"/></g>
<g transform="translate(1854.00 674.76)"><path d="M3.9 1.600h8.400l4.300 4.300v10.500H3.900z" fill="#fff" stroke="#cdcdcd" stroke-width="1.300" stroke-linejoin="round"/><path d="M12.3 1.600v4.300h4.300z" fill="#e9e9e9" stroke="#cdcdcd" stroke-width="1" stroke-linejoin="round"/><rect x=".8" y="4" width="9.200" height="3.700" rx=".7" fill="#cf212c"/><path d="M2.300 5.850h6.200" stroke="#f4b4b8" stroke-width=".9"/></g>
<path d="M608.90 717.48l4.9 4.8-4.9 4.8" stroke="#666" stroke-width="1.5" stroke-linecap="round" stroke-linejoin="round"/>
<g transform="translate(623.00 710.78)"><path d="M1.9 1.7h10.4l6 6V21.800H1.9z" fill="#fff" stroke="#c9c9c9" stroke-width="1.4" stroke-linejoin="round"/><path d="M12.3 1.7v6h6z" fill="#eee" stroke="#c9c9c9" stroke-width="1.2" stroke-linejoin="round"/><path d="M5.1 7.500h3.900M5.100 10.800h9.700M5.100 14.300h9.700M5.100 17.700h9.700" stroke="#333" stroke-width="1.500"/></g>
<g transform="translate(1854.00 713.28)"><path d="M3.9 1.600h8.400l4.300 4.300v10.500H3.900z" fill="#fff" stroke="#cdcdcd" stroke-width="1.300" stroke-linejoin="round"/><path d="M12.3 1.600v4.300h4.300z" fill="#e9e9e9" stroke="#cdcdcd" stroke-width="1" stroke-linejoin="round"/><rect x=".8" y="4" width="9.200" height="3.700" rx=".7" fill="#cf212c"/><path d="M2.300 5.850h6.200" stroke="#f4b4b8" stroke-width=".9"/></g>
<path d="M608.90 756.00l4.9 4.8-4.9 4.8" stroke="#666" stroke-width="1.5" stroke-linecap="round" stroke-linejoin="round"/>
<g transform="translate(622.00 748.80)"><path d="M5.2 20.2l3 2.6h12.4V4.200H18" fill="#fff" stroke="#4a6ad8" stroke-width="1.4" stroke-linejoin="round"/><rect x="1.7" y="1.1" width="16.3" height="19" rx="1.6" fill="#b8c6f1" stroke="#4a6ad8" stroke-width="1.5"/><path d="M5.1 1.2v18.8" stroke="#4a6ad8" stroke-width="1.4"/><path d="M1.9 19.6l3.4 3" stroke="#4a6ad8" stroke-width="1.4"/></g>
<g transform="translate(1854.00 751.80)"><path d="M3.9 1.600h8.400l4.300 4.300v10.500H3.900z" fill="#fff" stroke="#cdcdcd" stroke-width="1.300" stroke-linejoin="round"/><path d="M12.3 1.600v4.300h4.300z" fill="#e9e9e9" stroke="#cdcdcd" stroke-width="1" stroke-linejoin="round"/><rect x=".8" y="4" width="9.200" height="3.700" rx=".7" fill="#cf212c"/><path d="M2.300 5.850h6.200" stroke="#f4b4b8" stroke-width=".9"/></g>
<path d="M608.90 794.52l4.9 4.8-4.9 4.8" stroke="#666" stroke-width="1.5" stroke-linecap="round" stroke-linejoin="round"/>
<g transform="translate(622.00 788.82)"><path d="M.9 1l10.1 2.1v17.6L.9 19z" fill="#b8c6f1" stroke="#4a6ad8" stroke-width="1.4" stroke-linejoin="round"/><path d="M21.1 1L11 3.100v17.6l10.1-1.700z" fill="#fff" stroke="#4a6ad8" stroke-width="1.4" stroke-linejoin="round"/><path d="M13.4 6.4l5-1M13.4 9.300l5-1M13.4 12.200l5-1M13.4 15.100l5-1" stroke="#222" stroke-width="1.6"/></g>
<g transform="translate(1854.00 790.32)"><path d="M3.9 1.600h8.400l4.300 4.300v10.500H3.900z" fill="#fff" stroke="#cdcdcd" stroke-width="1.300" stroke-linejoin="round"/><path d="M12.3 1.600v4.300h4.300z" fill="#e9e9e9" stroke="#cdcdcd" stroke-width="1" stroke-linejoin="round"/><rect x=".8" y="4" width="9.200" height="3.700" rx=".7" fill="#cf212c"/><path d="M2.300 5.850h6.200" stroke="#f4b4b8" stroke-width=".9"/></g>
<path d="M608.90 833.04l4.9 4.8-4.9 4.8" stroke="#666" stroke-width="1.5" stroke-linecap="round" stroke-linejoin="round"/>
<g transform="translate(622.00 827.34)"><path d="M.9 1l10.1 2.1v17.6L.9 19z" fill="#b8c6f1" stroke="#4a6ad8" stroke-width="1.4" stroke-linejoin="round"/><path d="M21.1 1L11 3.100v17.6l10.1-1.700z" fill="#fff" stroke="#4a6ad8" stroke-width="1.4" stroke-linejoin="round"/><path d="M13.4 6.4l5-1M13.4 9.300l5-1M13.4 12.200l5-1M13.4 15.100l5-1" stroke="#222" stroke-width="1.6"/></g>
<g transform="translate(1854.00 828.84)"><path d="M3.9 1.600h8.400l4.300 4.300v10.500H3.900z" fill="#fff" stroke="#cdcdcd" stroke-width="1.300" stroke-linejoin="round"/><path d="M12.3 1.600v4.300h4.300z" fill="#e9e9e9" stroke="#cdcdcd" stroke-width="1" stroke-linejoin="round"/><rect x=".8" y="4" width="9.200" height="3.700" rx=".7" fill="#cf212c"/><path d="M2.300 5.850h6.200" stroke="#f4b4b8" stroke-width=".9"/></g>
<path d="M608.90 871.56l4.9 4.8-4.9 4.8" stroke="#666" stroke-width="1.5" stroke-linecap="round" stroke-linejoin="round"/>
<g transform="translate(622.00 864.36)"><path d="M5.2 20.2l3 2.6h12.4V4.200H18" fill="#fff" stroke="#4a6ad8" stroke-width="1.4" stroke-linejoin="round"/><rect x="1.7" y="1.1" width="16.3" height="19" rx="1.6" fill="#b8c6f1" stroke="#4a6ad8" stroke-width="1.5"/><path d="M5.1 1.2v18.8" stroke="#4a6ad8" stroke-width="1.4"/><path d="M1.9 19.6l3.4 3" stroke="#4a6ad8" stroke-width="1.4"/></g>
<g transform="translate(1854.00 867.36)"><path d="M3.9 1.600h8.400l4.300 4.300v10.500H3.900z" fill="#fff" stroke="#cdcdcd" stroke-width="1.300" stroke-linejoin="round"/><path d="M12.3 1.600v4.300h4.300z" fill="#e9e9e9" stroke="#cdcdcd" stroke-width="1" stroke-linejoin="round"/><rect x=".8" y="4" width="9.200" height="3.700" rx=".7" fill="#cf212c"/><path d="M2.300 5.850h6.200" stroke="#f4b4b8" stroke-width=".9"/></g>
<path d="M608.90 910.08l4.9 4.8-4.9 4.8" stroke="#666" stroke-width="1.5" stroke-linecap="round" stroke-linejoin="round"/>
<g transform="translate(621.00 905.38)"><path d="M5.6 9.500v6.500c1.500 1.500 3.600 2.300 6.400 2.300s4.900-.8 6.400-2.300V9.500" fill="#adadad" stroke="#444" stroke-width="1.500" stroke-linejoin="round"/><path d="M12 1.400L1.700 6.900 12 12.300l10.300-5.400z" fill="#b8b8b8" stroke="#444" stroke-width="1.500" stroke-linejoin="round"/><path d="M2.800 8.300v8.500" stroke="#e58a68" stroke-width="2.400"/><circle cx="2.800" cy="17" r="1.700" fill="#e07a55"/></g>
<g transform="translate(1854.00 905.88)"><path d="M3.9 1.600h8.400l4.300 4.300v10.500H3.900z" fill="#fff" stroke="#cdcdcd" stroke-width="1.300" stroke-linejoin="round"/><path d="M12.3 1.600v4.300h4.300z" fill="#e9e9e9" stroke="#cdcdcd" stroke-width="1" stroke-linejoin="round"/><rect x=".8" y="4" width="9.200" height="3.700" rx=".7" fill="#cf212c"/><path d="M2.300 5.850h6.200" stroke="#f4b4b8" stroke-width=".9"/></g>
<path d="M608.90 948.60l4.9 4.8-4.9 4.8" stroke="#666" stroke-width="1.5" stroke-linecap="round" stroke-linejoin="round"/>
<g transform="translate(622.00 941.40)"><path d="M5.2 20.2l3 2.6h12.4V4.200H18" fill="#fff" stroke="#4a6ad8" stroke-width="1.4" stroke-linejoin="round"/><rect x="1.7" y="1.1" width="16.3" height="19" rx="1.6" fill="#b8c6f1" stroke="#4a6ad8" stroke-width="1.5"/><path d="M5.1 1.2v18.8" stroke="#4a6ad8" stroke-width="1.4"/><path d="M1.9 19.6l3.4 3" stroke="#4a6ad8" stroke-width="1.4"/></g>
<g transform="translate(1854.00 944.40)"><path d="M3.9 1.600h8.400l4.300 4.300v10.500H3.900z" fill="#fff" stroke="#cdcdcd" stroke-width="1.300" stroke-linejoin="round"/><path d="M12.3 1.600v4.300h4.300z" fill="#e9e9e9" stroke="#cdcdcd" stroke-width="1" stroke-linejoin="round"/><rect x=".8" y="4" width="9.200" height="3.700" rx=".7" fill="#cf212c"/><path d="M2.300 5.850h6.200" stroke="#f4b4b8" stroke-width=".9"/></g>
<path d="M608.90 987.12l4.9 4.8-4.9 4.8" stroke="#666" stroke-width="1.5" stroke-linecap="round" stroke-linejoin="round"/>
<g transform="translate(622.00 981.42)"><path d="M.9 1l10.1 2.1v17.6L.9 19z" fill="#b8c6f1" stroke="#4a6ad8" stroke-width="1.4" stroke-linejoin="round"/><path d="M21.1 1L11 3.100v17.6l10.1-1.700z" fill="#fff" stroke="#4a6ad8" stroke-width="1.4" stroke-linejoin="round"/><path d="M13.4 6.4l5-1M13.4 9.300l5-1M13.4 12.200l5-1M13.4 15.100l5-1" stroke="#222" stroke-width="1.6"/></g>
<g transform="translate(1854.00 982.92)"><path d="M3.9 1.600h8.400l4.300 4.300v10.500H3.900z" fill="#fff" stroke="#cdcdcd" stroke-width="1.300" stroke-linejoin="round"/><path d="M12.3 1.600v4.300h4.300z" fill="#e9e9e9" stroke="#cdcdcd" stroke-width="1" stroke-linejoin="round"/><rect x=".8" y="4" width="9.200" height="3.700" rx=".7" fill="#cf212c"/><path d="M2.300 5.850h6.200" stroke="#f4b4b8" stroke-width=".9"/></g>
<path d="M608.90 1025.64l4.9 4.8-4.9 4.8" stroke="#666" stroke-width="1.5" stroke-linecap="round" stroke-linejoin="round"/>
<g transform="translate(622.00 1018.44)"><path d="M5.2 20.2l3 2.6h12.4V4.200H18" fill="#fff" stroke="#4a6ad8" stroke-width="1.4" stroke-linejoin="round"/><rect x="1.7" y="1.1" width="16.3" height="19" rx="1.6" fill="#b8c6f1" stroke="#4a6ad8" stroke-width="1.5"/><path d="M5.1 1.2v18.8" stroke="#4a6ad8" stroke-width="1.4"/><path d="M1.9 19.6l3.4 3" stroke="#4a6ad8" stroke-width="1.4"/></g>
<g transform="translate(1854.00 1021.44)"><path d="M3.9 1.600h8.400l4.300 4.300v10.500H3.900z" fill="#fff" stroke="#cdcdcd" stroke-width="1.300" stroke-linejoin="round"/><path d="M12.3 1.600v4.300h4.300z" fill="#e9e9e9" stroke="#cdcdcd" stroke-width="1" stroke-linejoin="round"/><rect x=".8" y="4" width="9.200" height="3.700" rx=".7" fill="#cf212c"/><path d="M2.300 5.850h6.200" stroke="#f4b4b8" stroke-width=".9"/></g>
<path d="M608.90 1064.16l4.9 4.8-4.9 4.8" stroke="#666" stroke-width="1.5" stroke-linecap="round" stroke-linejoin="round"/>
<g transform="translate(622.00 1056.96)"><path d="M5.2 20.2l3 2.6h12.4V4.200H18" fill="#fff" stroke="#4a6ad8" stroke-width="1.4" stroke-linejoin="round"/><rect x="1.7" y="1.1" width="16.3" height="19" rx="1.6" fill="#b8c6f1" stroke="#4a6ad8" stroke-width="1.5"/><path d="M5.1 1.2v18.8" stroke="#4a6ad8" stroke-width="1.4"/><path d="M1.9 19.6l3.4 3" stroke="#4a6ad8" stroke-width="1.4"/></g>
<path d="M608.90 1102.68l4.9 4.8-4.9 4.8" stroke="#666" stroke-width="1.5" stroke-linecap="round" stroke-linejoin="round"/>
<g transform="translate(622.00 1095.48)"><path d="M5.2 20.2l3 2.6h12.4V4.200H18" fill="#fff" stroke="#4a6ad8" stroke-width="1.4" stroke-linejoin="round"/><rect x="1.7" y="1.1" width="16.3" height="19" rx="1.6" fill="#b8c6f1" stroke="#4a6ad8" stroke-width="1.5"/><path d="M5.1 1.2v18.8" stroke="#4a6ad8" stroke-width="1.4"/><path d="M1.9 19.6l3.4 3" stroke="#4a6ad8" stroke-width="1.4"/></g>
<g transform="translate(1854.00 1098.48)"><path d="M3.9 1.600h8.400l4.300 4.300v10.500H3.900z" fill="#fff" stroke="#cdcdcd" stroke-width="1.300" stroke-linejoin="round"/><path d="M12.3 1.600v4.300h4.300z" fill="#e9e9e9" stroke="#cdcdcd" stroke-width="1" stroke-linejoin="round"/><rect x=".8" y="4" width="9.200" height="3.700" rx=".7" fill="#cf212c"/><path d="M2.300 5.850h6.200" stroke="#f4b4b8" stroke-width=".9"/></g>
<path d="M608.90 1141.20l4.9 4.8-4.9 4.8" stroke="#666" stroke-width="1.5" stroke-linecap="round" stroke-linejoin="round"/>
<g transform="translate(622.00 1135.50)"><path d="M.9 1l10.1 2.1v17.6L.9 19z" fill="#b8c6f1" stroke="#4a6ad8" stroke-width="1.4" stroke-linejoin="round"/><path d="M21.1 1L11 3.100v17.6l10.1-1.700z" fill="#fff" stroke="#4a6ad8" stroke-width="1.4" stroke-linejoin="round"/><path d="M13.4 6.4l5-1M13.4 9.300l5-1M13.4 12.200l5-1M13.4 15.100l5-1" stroke="#222" stroke-width="1.6"/></g>
<g transform="translate(1854.00 1137.00)"><path d="M3.9 1.600h8.400l4.300 4.300v10.500H3.900z" fill="#fff" stroke="#cdcdcd" stroke-width="1.300" stroke-linejoin="round"/><path d="M12.3 1.600v4.300h4.300z" fill="#e9e9e9" stroke="#cdcdcd" stroke-width="1" stroke-linejoin="round"/><rect x=".8" y="4" width="9.200" height="3.700" rx=".7" fill="#cf212c"/><path d="M2.300 5.850h6.200" stroke="#f4b4b8" stroke-width=".9"/></g>
<path d="M608.90 1179.72l4.9 4.8-4.9 4.8" stroke="#666" stroke-width="1.5" stroke-linecap="round" stroke-linejoin="round"/>
<g transform="translate(622.00 1172.52)"><path d="M5.2 20.2l3 2.6h12.4V4.200H18" fill="#fff" stroke="#4a6ad8" stroke-width="1.4" stroke-linejoin="round"/><rect x="1.7" y="1.1" width="16.3" height="19" rx="1.6" fill="#b8c6f1" stroke="#4a6ad8" stroke-width="1.5"/><path d="M5.1 1.2v18.8" stroke="#4a6ad8" stroke-width="1.4"/><path d="M1.9 19.6l3.4 3" stroke="#4a6ad8" stroke-width="1.4"/></g>
<g transform="translate(1854.00 1175.52)"><path d="M3.9 1.600h8.400l4.300 4.300v10.500H3.900z" fill="#fff" stroke="#cdcdcd" stroke-width="1.300" stroke-linejoin="round"/><path d="M12.3 1.600v4.300h4.300z" fill="#e9e9e9" stroke="#cdcdcd" stroke-width="1" stroke-linejoin="round"/><rect x=".8" y="4" width="9.200" height="3.700" rx=".7" fill="#cf212c"/><path d="M2.300 5.850h6.200" stroke="#f4b4b8" stroke-width=".9"/></g>
<g stroke="#8a9fe3" stroke-width="1.600" stroke-linejoin="round"><path d="M1958.600 97.800H1949.100V75.800h11.700l6.700 6.700v6"/><path d="M1960.800 75.800v6.700h6.700"/><circle cx="1965" cy="94.200" r="5.200" stroke-width="1.400"/><path d="M1965 93.400v3.400M1965 91.200v.9" stroke-width="1.500"/></g>
<g stroke="#a9c3f5" stroke-width="1.600"><rect x="1946.300" y="125.200" width="23" height="16.800"/><path d="M1949.800 129.900h5M1949.800 134h16.200M1949.800 137.500h13.400"/></g>
<g transform="translate(1957.8 180) rotate(-38) scale(0.93) translate(-13.700 -6.700)"><path d="M21.500 1.700H5.500a5 5 0 0 0 0 10h17.500a3.800 3.800 0 0 0 0-7.600H8a2.600 2.600 0 0 0 0 5.200H19.500" stroke="#86cc93" stroke-width="1.61" stroke-linecap="round"/></g>
<g stroke="#f2c76e" stroke-width="1.600" stroke-linejoin="round"><path d="M1949.100 215.700h18.700v15.300l-7.200 7.200h-11.500z"/><path d="M1949.100 218.800h18.700" stroke-width="1.400"/><path d="M1967.800 231h-7.200v7.200"/></g>
<g stroke="#92c4d4" stroke-width="1.400" stroke-linejoin="round"><path d="M1953.600 261.200l-7.300 3.900v1h14.600v-1z"/><path d="M1948.300 268v8.600M1951.800 268v8.600M1955.400 268v4.500M1958.900 268v4" stroke-width="1.500"/><path d="M1946.300 277.500h7.500M1944.500 280.300h9.300"/><path d="M1955.600 286.500V274.300a.8.800 0 0 1 .8-.8h4.600l1.500 2.100h7a.8.800 0 0 1 .8.800v10.100z" stroke-width="1.500"/><path d="M1955.600 278.500h14.700"/></g>
<g stroke="#f0a58c" stroke-width="1.500" stroke-linejoin="round"><path d="M1946.300 309.200h12.200l10.300 12.300-9.400 10-13.100-13.500z"/><circle cx="1950.900" cy="314" r="1.200" fill="#f0a58c" stroke="none"/></g>
<g stroke="#e0b098" stroke-width="1.500"><rect x="1945" y="360.300" width="15.600" height="10.200" rx="5.100"/><rect x="1952.800" y="365.500" width="17.600" height="9.800" rx="4.900"/></g>
<path d="M1944.300 395.200h27.300" stroke="#dedede" stroke-width="1.200"/>
<g stroke="#585858" stroke-width="1.500" stroke-linecap="round" stroke-linejoin="round"><path d="M1965.500 431.800A11 11 0 1 1 1968.700 423.600"/><path d="M1951.500 423.600h11.500M1958.600 419l4.600 4.600-4.600 4.600"/></g><path d="M1964.300 432.200h6.400l-3.200 3.600z" fill="#585858"/></svg>
</div></div></body></html>
